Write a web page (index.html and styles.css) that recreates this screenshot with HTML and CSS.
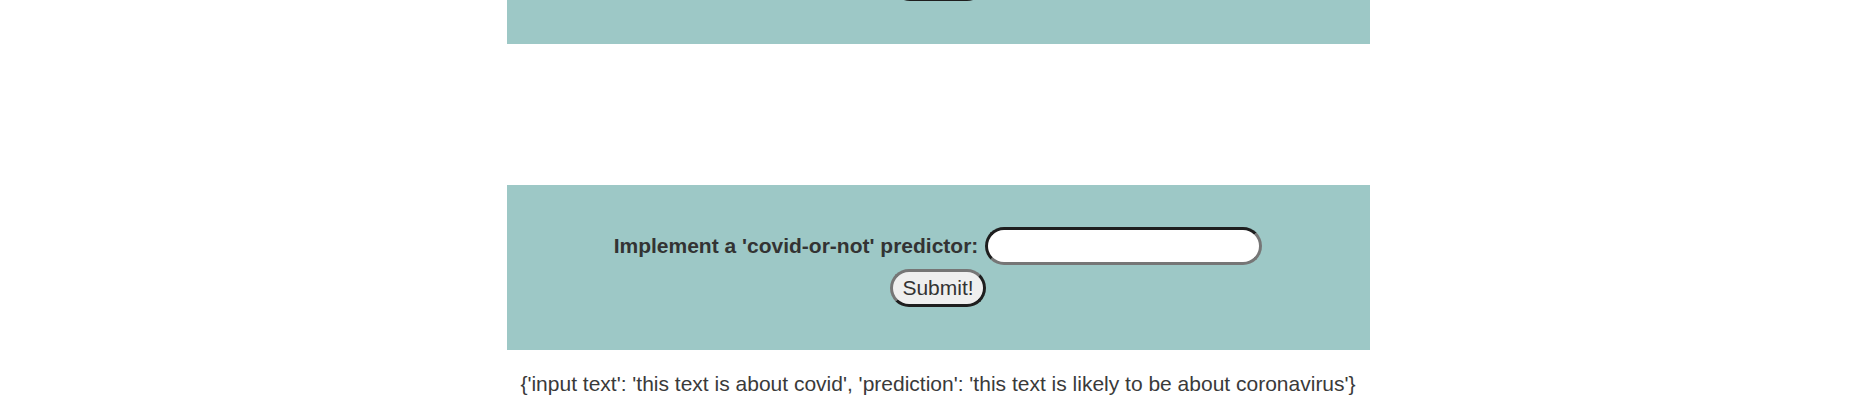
FILE: index.html
```html
<!DOCTYPE html>
<html lang="en">
<head>
<meta charset="utf-8">
<title>covid-or-not</title>
<link rel="stylesheet" href="styles.css">
</head>
<body>
<main class="page">
  <section class="panel panel-prev" aria-hidden="true">
    <div class="form">
      <div class="row">
        <span class="submit submit-stub"></span>
      </div>
    </div>
  </section>
  <section class="panel panel-main">
    <form class="form">
      <div class="row">
        <label class="label" for="q1">Implement a 'covid-or-not' predictor:</label>
        <input class="field" id="q1" type="text">
      </div>
      <div class="row">
        <button class="submit" type="button">Submit!</button>
      </div>
    </form>
  </section>
  <p class="result">{'input text': 'this text is about covid', 'prediction': 'this text is likely to be about coronavirus'}</p>
</main>
</body>
</html>
```

FILE: styles.css
```css
html, body {
  margin: 0;
  padding: 0;
  background: #ffffff;
}

body {
  font-family: "Liberation Sans", Arial, sans-serif;
  font-size: 21px;
  color: #333333;
  overflow: hidden;
}

.page {
  width: 863px;
  margin: 0 auto;
  display: flex;
  flex-direction: column;
}

.panel {
  background: #9dc8c6;
  height: 165px;
  box-sizing: border-box;
  padding-top: 42px;
}

.panel-prev {
  margin-top: -121px;
  margin-bottom: 141px;
  padding-top: 84px;
}

.form {
  margin: 0;
  display: flex;
  flex-direction: column;
  align-items: center;
  gap: 4px;
}

.row {
  display: flex;
  align-items: center;
  justify-content: center;
  gap: 7px;
}

.label {
  font-weight: bold;
  line-height: 24px;
  color: #333333;
}

.field {
  width: 277px;
  height: 38px;
  box-sizing: border-box;
  border-style: solid;
  border-width: 3px;
  border-color: #1e1e1e #767676 #767676 #1e1e1e;
  border-radius: 19px;
  background: #ffffff;
  padding: 0 14px;
  font: inherit;
  font-weight: normal;
  outline: none;
}

.submit {
  height: 38px;
  box-sizing: border-box;
  border-style: solid;
  border-width: 3px;
  border-color: #767676 #1e1e1e #1e1e1e #767676;
  border-radius: 19px;
  background: #efefef;
  padding: 0 9px;
  font-family: inherit;
  font-size: 21px;
  line-height: 24px;
  color: #333333;
}

.submit-stub {
  display: block;
  width: 95px;
}

.result {
  margin: 22px 0 0;
  text-align: center;
  line-height: 24px;
  color: #3a3a3a;
  white-space: nowrap;
}
```
